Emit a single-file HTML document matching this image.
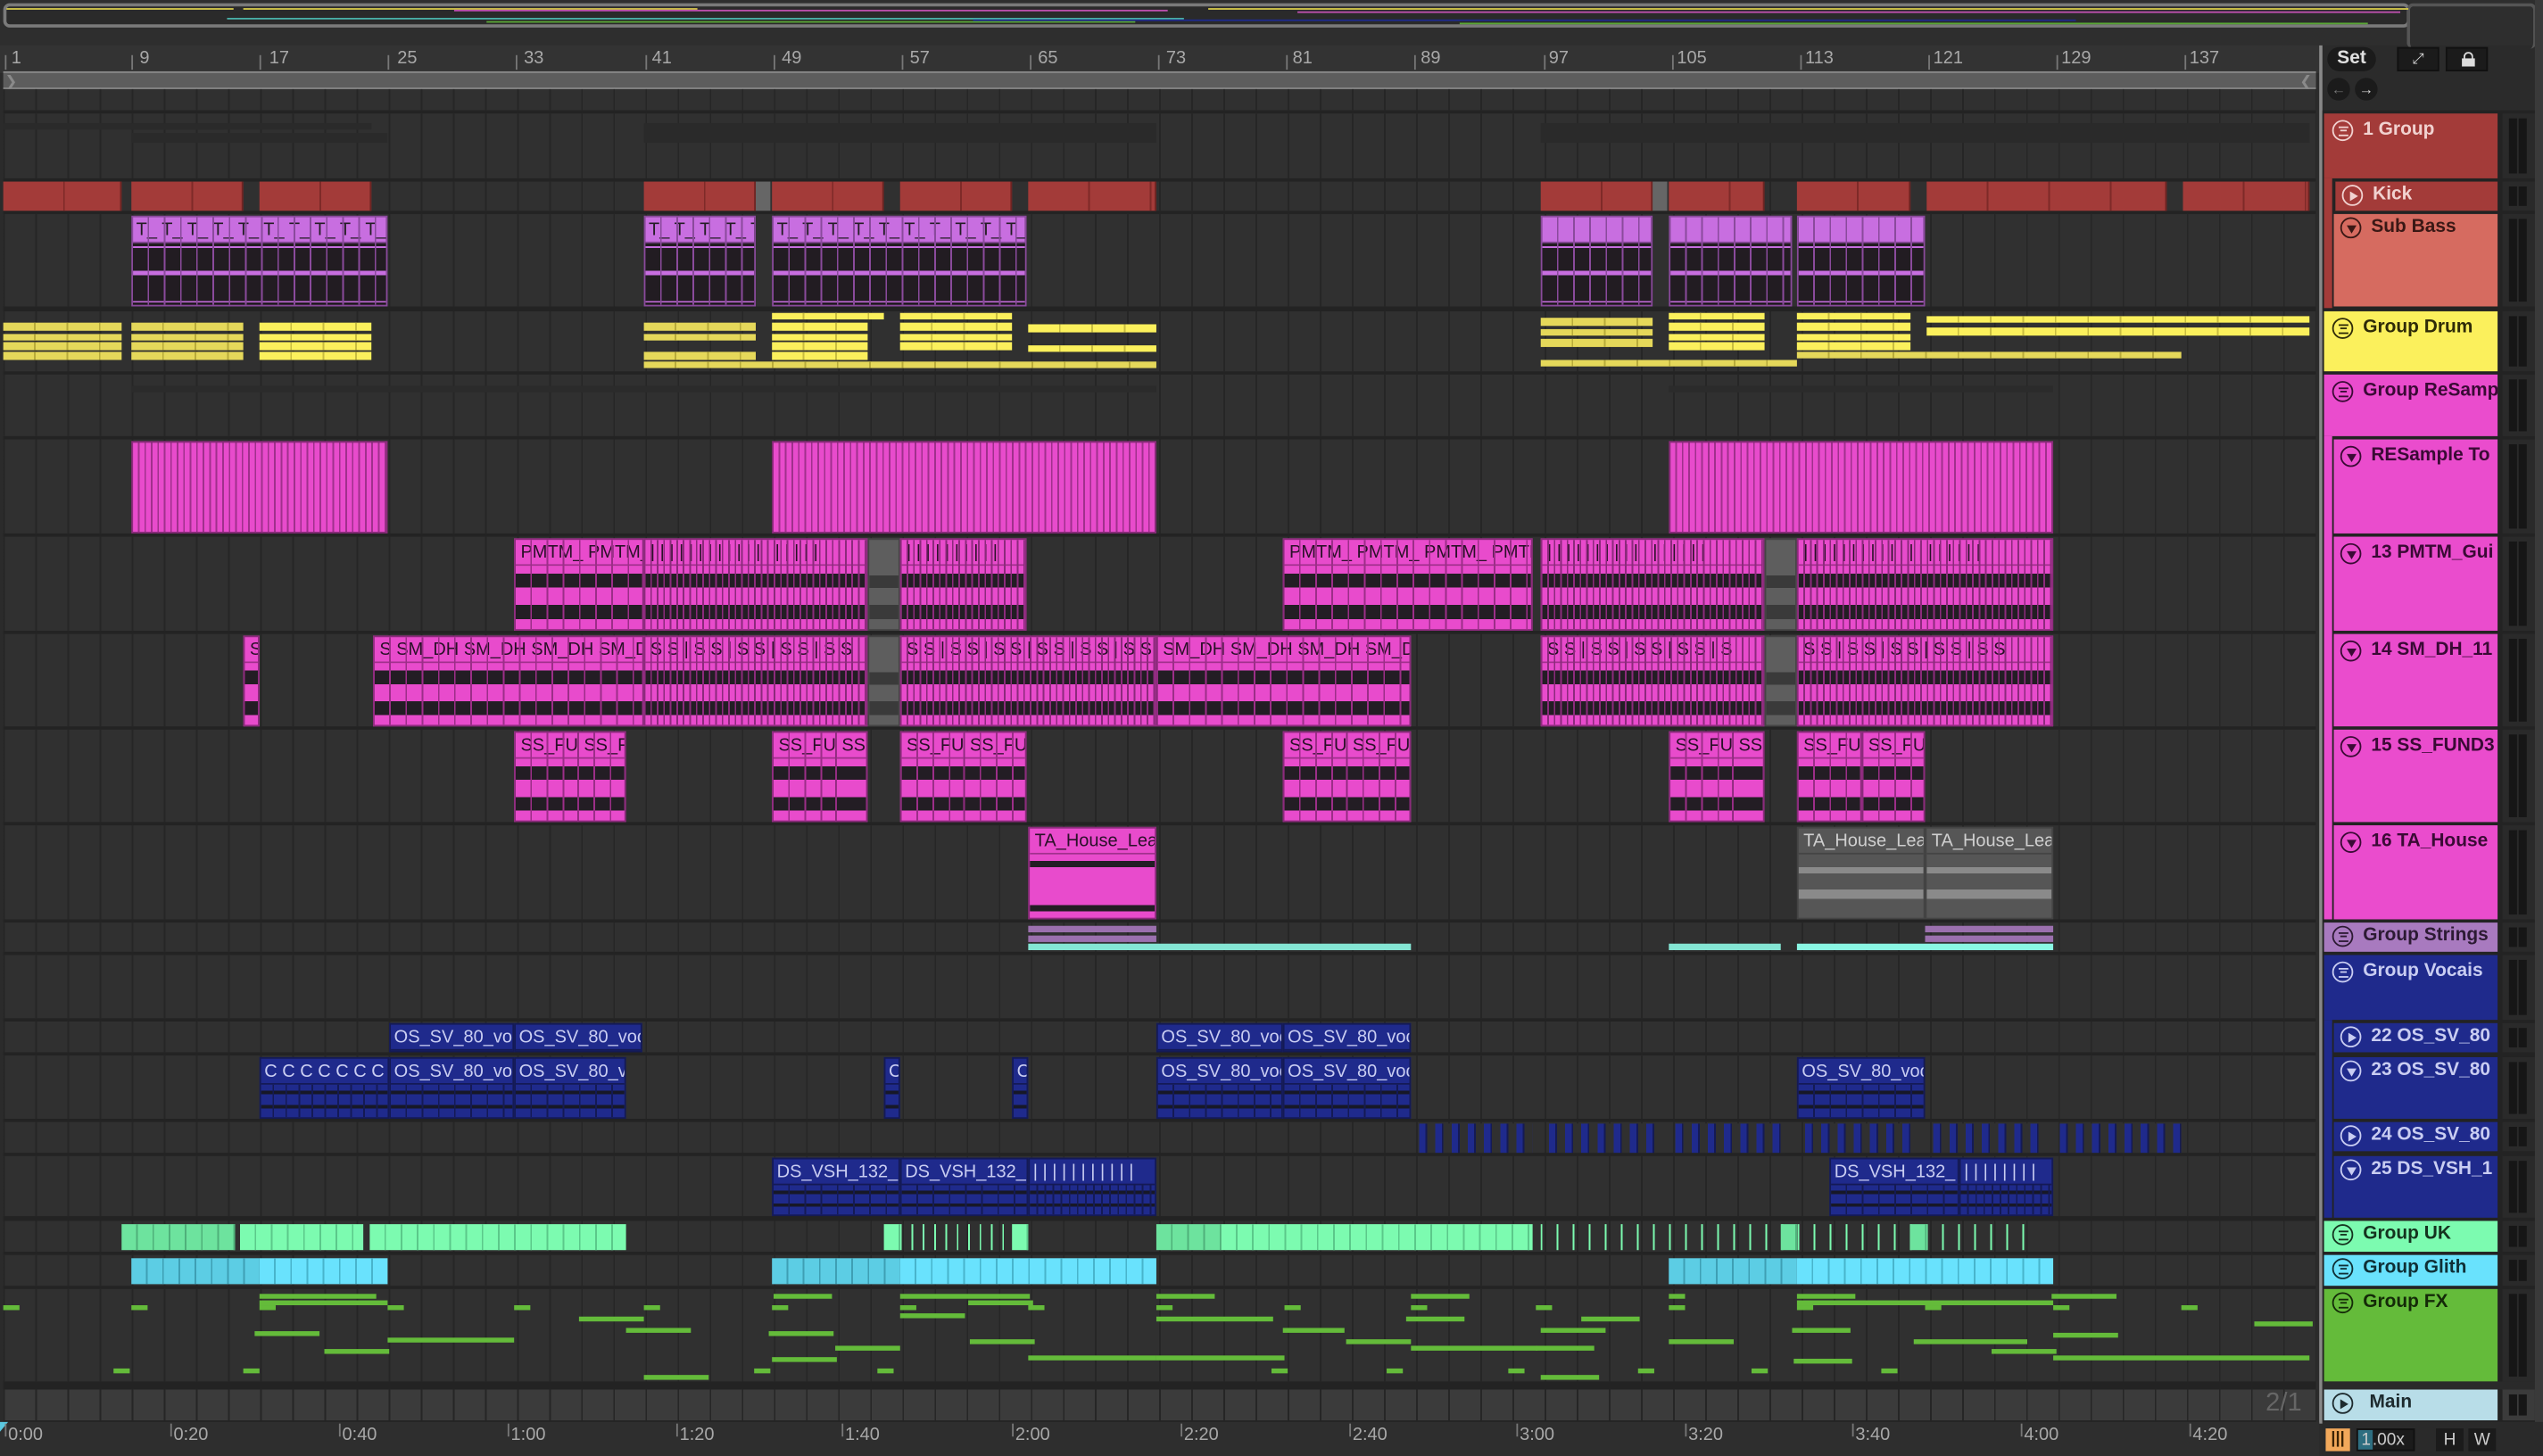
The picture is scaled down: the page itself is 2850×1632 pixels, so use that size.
<!DOCTYPE html>
<html><head><meta charset="utf-8"><style>
*{margin:0;padding:0;box-sizing:border-box}
html,body{width:2850px;height:1632px;overflow:hidden;background:#2b2b2b}
#s{position:absolute;left:0;top:0;width:1568px;height:898px;transform:scale(1.8176,1.8174);transform-origin:0 0;background:#2b2b2b;font-family:"Liberation Sans",sans-serif;overflow:hidden}
.a{position:absolute}
#arr{position:absolute;left:2px;top:55px;width:1426px;height:822px;background:#232323}
.row{position:absolute;left:0;width:1426px;background-color:#303030;background-image:repeating-linear-gradient(90deg,#262626 0 1px,transparent 1px 19.8px)}
.c{position:absolute;overflow:hidden;white-space:nowrap}
.k{background:#a33b39;border-right:1px solid #6e2422;background-image:repeating-linear-gradient(90deg,transparent 0 37px,#7e2a28 37px 38px)}
.sb{background:#221c22;border:1px solid #8a4a9c}
.sb .h{height:16px;background:#c86ee0;color:#231d24;font-size:11px;line-height:17px;padding-left:2px;border-bottom:1px solid #8a4a9c;background-image:repeating-linear-gradient(90deg,transparent 0 9px,#8a4a9c 9px 10px)}
.sb .w{position:absolute;left:0;right:0;top:16px;bottom:0;background:linear-gradient(#221c22 0 2px,#c86ee0 2px 3px,#221c22 3px 45%,#c86ee0 45% 52%,#221c22 52% 94%,#c86ee0 94% 96%,#221c22 96%);}
.sb .v{position:absolute;left:0;right:0;top:0;bottom:0;background:repeating-linear-gradient(90deg,transparent 0 9px,#8a4a9c 9px 10px)}
.y{background:#e5d85a;background-image:repeating-linear-gradient(90deg,transparent 0 19px,#b8ab3a 19px 20px)}
.yy{background:#fbf05c;background-image:repeating-linear-gradient(90deg,transparent 0 19px,#c8bd40 19px 20px)}
.p{background:#e84bcc;border:1px solid #8c2a7c}
.p .h{height:16px;color:#2a1028;font-size:11px;line-height:17px;padding-left:3px;border-bottom:1px solid #a0308c;overflow:hidden}
.p .w{position:absolute;left:0;right:0;top:16px;bottom:0;background:linear-gradient(#e84bcc 0 12%,#231d24 12% 34%,#e84bcc 34% 62%,#231d24 62% 84%,#e84bcc 84%)}
.p .v{position:absolute;left:0;right:0;top:0;bottom:0;background:repeating-linear-gradient(90deg,transparent 0 9px,#9c2e88 9px 10px)}
.dense .v{background:repeating-linear-gradient(90deg,transparent 0 3px,#8c2a7c 3px 4px)}
.g{background:#5e5e5e;border:1px solid #444}
.g .w{position:absolute;left:0;right:0;top:16px;bottom:0;background:linear-gradient(#5e5e5e 0 15%,#3a3a3a 15% 35%,#5e5e5e 35% 62%,#3a3a3a 62% 84%,#5e5e5e 84%)}
.gr{background:#565656;border:1px solid #444}
.gr .h{height:16px;color:#cfcfcf;font-size:11px;line-height:17px;padding-left:3px;border-bottom:1px solid #444}
.gr .w{position:absolute;left:0;right:0;top:16px;bottom:0;background:linear-gradient(#565656 0 20%,#8a8a8a 20% 30%,#565656 30% 55%,#8a8a8a 55% 70%,#565656 70%)}
.b{background:#1f2a8c;border:1px solid #141a55}
.b .h{height:16px;color:#c9cdf2;font-size:11px;line-height:17px;padding-left:2px;border-bottom:1px solid #141a55}
.b .w{position:absolute;left:0;right:0;top:16px;bottom:0;background:linear-gradient(#1f2a8c 0 18%,#171827 18% 30%,#1f2a8c 30% 62%,#171827 62% 74%,#1f2a8c 74%)}
.b .v{position:absolute;left:0;right:0;top:16px;bottom:0;background:repeating-linear-gradient(90deg,transparent 0 9px,#141a55 9px 10px)}
.uk{background:#7cfbb0;background-image:repeating-linear-gradient(90deg,transparent 0 9px,#5bc88a 9px 10px)}
.ukd{background:#6de39e;background-image:repeating-linear-gradient(90deg,transparent 0 9px,#4fb07a 9px 10px)}
.cy{background:#69e2fd;background-image:repeating-linear-gradient(90deg,transparent 0 9px,#48b4cc 9px 10px)}
.cyd{background:#5ccde4;background-image:repeating-linear-gradient(90deg,transparent 0 9px,#3e9fb4 9px 10px)}
.fx{position:absolute;height:3px;background:#64bb3a}
.hd{position:absolute;left:1433px;width:107px;font-weight:bold;font-size:11.5px;overflow:hidden;white-space:nowrap}
.hd span{position:absolute;left:24px;top:4px}
.hd.sub span{left:29px}
.ic{position:absolute;left:5px;top:4px;width:13px;height:13px;border:1.3px solid currentColor;border-radius:50%}
.sub .ic{left:10px}
.ic.l::before{content:"";position:absolute;left:2.5px;top:3px;width:6px;height:4px;border-top:1px solid currentColor;border-bottom:1px solid currentColor}
.ic.l::after{content:"";position:absolute;left:3.5px;top:5px;width:4px;height:1px;background:currentColor}
.ic.pl::before{content:"";position:absolute;left:4px;top:2.5px;border-left:5px solid currentColor;border-top:3.5px solid transparent;border-bottom:3.5px solid transparent}
.ic.dn::before{content:"";position:absolute;left:2.5px;top:4px;border-top:5px solid currentColor;border-left:3.5px solid transparent;border-right:3.5px solid transparent}
.m{position:absolute;left:1543px;width:20px;background:#2a2a2a}
.m::before{content:"";position:absolute;left:4px;top:3px;bottom:3px;width:5px;background:#161616}
.m::after{content:"";position:absolute;left:10px;top:3px;bottom:3px;width:5px;background:#161616}
.rl{position:absolute;top:30px;font-size:11px;color:#a8a8a8}
.tk{position:absolute;top:34px;width:1px;height:9px;background:#777}
.tl{position:absolute;top:879px;font-size:11px;color:#a8a8a8}
.tt{position:absolute;top:878px;width:1px;height:8px;background:#777}
</style></head><body><div id="s">

<!-- overview -->
<div class="a" style="left:0;top:0;width:1568px;height:28px;background:#2e2e2e"></div>
<div class="a" style="left:2px;top:2px;width:1484px;height:15px;border:2px solid #7a7a7a;border-radius:4px;background:#2a2a2a"></div>
<div class="a" style="left:1484px;top:2px;width:80px;height:28px;border:2px solid #555;border-radius:4px;border-bottom:none"></div>
<div class="a" style="left:4px;top:5px;width:140px;height:1px;background:#d4c84a"></div>
<div class="a" style="left:150px;top:5px;width:280px;height:1px;background:#d4c84a"></div>
<div class="a" style="left:280px;top:6px;width:440px;height:1px;background:#c050b0"></div>
<div class="a" style="left:140px;top:11px;width:590px;height:1px;background:#49b0a8"></div>
<div class="a" style="left:300px;top:13px;width:400px;height:1px;background:#5aa836"></div>
<div class="a" style="left:600px;top:12px;width:680px;height:1px;background:#1f2a8c"></div>
<div class="a" style="left:745px;top:5px;width:740px;height:1px;background:#d4c84a"></div>
<div class="a" style="left:800px;top:7px;width:680px;height:1px;background:#c050b0"></div>
<div class="a" style="left:900px;top:14px;width:560px;height:1px;background:#5aa836"></div>

<!-- ruler -->
<div class="a" style="left:0;top:28px;width:1430px;height:17px;background:#333"></div>
<div class="a" style="left:2px;top:44px;width:1426px;height:11px;background:#5d5d5d;border-top:1px solid #8a8a8a;border-bottom:1px solid #888"></div>
<div class="a" style="left:3px;top:45px;color:#8a8a8a;font-size:9px">&#x276F;</div>
<div class="a" style="left:1418px;top:45px;color:#8a8a8a;font-size:9px">&#x276E;</div>
<div class="tk" style="left:3px"></div><div class="rl" style="left:7px">1</div>
<div class="tk" style="left:81px"></div><div class="rl" style="left:86px">9</div>
<div class="tk" style="left:160px"></div><div class="rl" style="left:166px">17</div>
<div class="tk" style="left:239px"></div><div class="rl" style="left:245px">25</div>
<div class="tk" style="left:318px"></div><div class="rl" style="left:323px">33</div>
<div class="tk" style="left:398px"></div><div class="rl" style="left:402px">41</div>
<div class="tk" style="left:477px"></div><div class="rl" style="left:482px">49</div>
<div class="tk" style="left:556px"></div><div class="rl" style="left:561px">57</div>
<div class="tk" style="left:635px"></div><div class="rl" style="left:640px">65</div>
<div class="tk" style="left:714px"></div><div class="rl" style="left:719px">73</div>
<div class="tk" style="left:793px"></div><div class="rl" style="left:797px">81</div>
<div class="tk" style="left:872px"></div><div class="rl" style="left:876px">89</div>
<div class="tk" style="left:952px"></div><div class="rl" style="left:955px">97</div>
<div class="tk" style="left:1031px"></div><div class="rl" style="left:1034px">105</div>
<div class="tk" style="left:1110px"></div><div class="rl" style="left:1113px">113</div>
<div class="tk" style="left:1189px"></div><div class="rl" style="left:1192px">121</div>
<div class="tk" style="left:1268px"></div><div class="rl" style="left:1271px">129</div>
<div class="tk" style="left:1347px"></div><div class="rl" style="left:1350px">137</div>

<!-- Set / buttons -->
<div class="a" style="left:1435px;top:29px;width:30px;height:15px;border-radius:8px;background:#1b1b1b;color:#e0e0e0;font-size:11.5px;font-weight:bold;text-align:center;line-height:15px">Set</div>
<div class="a" style="left:1478px;top:29px;width:26px;height:15px;background:#1b1b1b;border:1px solid #111;color:#ddd;font-size:9px;text-align:center;line-height:13px">&#x2922;</div>
<div class="a" style="left:1508px;top:29px;width:26px;height:15px;background:#1b1b1b;border:1px solid #111;"><div class="a" style="left:9px;top:6px;width:8px;height:5px;background:#ddd"></div><div class="a" style="left:10px;top:2px;width:6px;height:6px;border:1.5px solid #ddd;border-radius:3px 3px 0 0;border-bottom:none"></div></div>
<div class="a" style="left:1435px;top:48px;width:14px;height:14px;border-radius:50%;background:#1b1b1b;color:#777;font-size:9px;text-align:center;line-height:14px">&#x2190;</div>
<div class="a" style="left:1452px;top:48px;width:14px;height:14px;border-radius:50%;background:#1b1b1b;color:#ddd;font-size:9px;text-align:center;line-height:14px">&#x2192;</div>

<div class="a" style="left:1430px;top:28px;width:2px;height:850px;background:#888"></div>

<div id="arr">
<!-- rows: top relative to 55 -->
<div class="row" style="top:0;height:13px"></div>
<div class="row" style="top:15px;height:40px"></div>
<div class="row" style="top:57px;height:18px"></div>
<div class="row" style="top:77px;height:57px"></div>
<div class="row" style="top:137px;height:37px"></div>
<div class="row" style="top:176px;height:38px"></div>
<div class="row" style="top:216px;height:58px"></div>
<div class="row" style="top:276px;height:58px"></div>
<div class="row" style="top:336px;height:57px"></div>
<div class="row" style="top:395px;height:57px"></div>
<div class="row" style="top:454px;height:58px"></div>
<div class="row" style="top:514px;height:18px"></div>
<div class="row" style="top:534px;height:39px"></div>
<div class="row" style="top:575px;height:19px"></div>
<div class="row" style="top:596px;height:39px"></div>
<div class="row" style="top:637px;height:19px"></div>
<div class="row" style="top:658px;height:37px"></div>
<div class="row" style="top:698px;height:19px"></div>
<div class="row" style="top:719px;height:19px"></div>
<div class="row" style="top:740px;height:57px"></div>
<div class="row" style="top:802px;height:19px;background-color:#3b3b3b"></div>
</div>

<!-- group overview faint -->
<div class="a" style="left:2px;top:76px;width:136px;height:4px;background:#2a2a2a"></div>
<div class="a" style="left:81px;top:76px;width:148px;height:4px;background:#2a2a2a"></div>
<div class="a" style="left:81px;top:82px;width:158px;height:6px;background:#2a2a2a"></div>
<div class="a" style="left:397px;top:76px;width:316px;height:12px;background:#2a2a2a"></div>
<div class="a" style="left:950px;top:76px;width:474px;height:12px;background:#2a2a2a"></div>
<div class="a" style="left:81px;top:238px;width:632px;height:4px;background:#2b2b2b"></div>
<div class="a" style="left:1029px;top:238px;width:237px;height:4px;background:#2b2b2b"></div>

<!-- Kick -->
<div class="c k" style="left:2px;top:112px;width:73px;height:18px"></div>
<div class="c k" style="left:81px;top:112px;width:69px;height:18px"></div>
<div class="c k" style="left:160px;top:112px;width:69px;height:18px"></div>
<div class="c k" style="left:397px;top:112px;width:69px;height:18px"></div>
<div class="c" style="left:466px;top:112px;width:9px;height:18px;background:#666"></div>
<div class="c k" style="left:476px;top:112px;width:69px;height:18px"></div>
<div class="c k" style="left:555px;top:112px;width:69px;height:18px"></div>
<div class="c k" style="left:634px;top:112px;width:79px;height:18px"></div>
<div class="c k" style="left:950px;top:112px;width:69px;height:18px"></div>
<div class="c" style="left:1019px;top:112px;width:9px;height:18px;background:#666"></div>
<div class="c k" style="left:1029px;top:112px;width:59px;height:18px"></div>
<div class="c k" style="left:1108px;top:112px;width:70px;height:18px"></div>
<div class="c k" style="left:1188px;top:112px;width:148px;height:18px"></div>
<div class="c k" style="left:1346px;top:112px;width:78px;height:18px"></div>

<!-- Sub bass -->
<div class="c sb" style="left:81px;top:133px;width:158px;height:56px"><div class="h">T_ T_ T_ T_ T_ T_ T_ T_ T_ T_ T_ T_ T_ T_ T_ T_</div><div class="w"></div><div class="v"></div></div>
<div class="c sb" style="left:397px;top:133px;width:69px;height:56px"><div class="h">T_ T_ T_ T_ T_ T_ T_</div><div class="w"></div><div class="v"></div></div>
<div class="c sb" style="left:476px;top:133px;width:157px;height:56px"><div class="h">T_ T_ T_ T_ T_ T_ T_ T_ T_ T_ T_ T_ T_ T_ T_ T_</div><div class="w"></div><div class="v"></div></div>
<div class="c sb" style="left:950px;top:133px;width:69px;height:56px"><div class="h" style="color:transparent">.</div><div class="w"></div><div class="v"></div></div>
<div class="c sb" style="left:1029px;top:133px;width:76px;height:56px"><div class="h" style="color:transparent">.</div><div class="w"></div><div class="v"></div></div>
<div class="c sb" style="left:1108px;top:133px;width:79px;height:56px"><div class="h" style="color:transparent">.</div><div class="w"></div><div class="v"></div></div>

<!-- Yellow drums -->
<div class="c y" style="left:2px;top:199px;width:73px;height:5px"></div><div class="c y" style="left:2px;top:206px;width:73px;height:4px"></div><div class="c y" style="left:2px;top:211px;width:73px;height:5px"></div><div class="c y" style="left:2px;top:217px;width:73px;height:5px"></div>
<div class="c y" style="left:81px;top:199px;width:69px;height:5px"></div><div class="c y" style="left:81px;top:206px;width:69px;height:4px"></div><div class="c y" style="left:81px;top:211px;width:69px;height:5px"></div><div class="c y" style="left:81px;top:217px;width:69px;height:5px"></div>
<div class="c yy" style="left:160px;top:199px;width:69px;height:5px"></div><div class="c yy" style="left:160px;top:206px;width:69px;height:4px"></div><div class="c yy" style="left:160px;top:211px;width:69px;height:5px"></div><div class="c yy" style="left:160px;top:217px;width:69px;height:5px"></div>
<div class="c y" style="left:397px;top:199px;width:69px;height:5px"></div><div class="c y" style="left:397px;top:206px;width:69px;height:4px"></div><div class="c y" style="left:397px;top:217px;width:69px;height:5px"></div>
<div class="c yy" style="left:476px;top:193px;width:69px;height:4px"></div><div class="c yy" style="left:476px;top:199px;width:59px;height:5px"></div><div class="c yy" style="left:476px;top:206px;width:59px;height:4px"></div><div class="c yy" style="left:476px;top:211px;width:59px;height:5px"></div><div class="c yy" style="left:476px;top:217px;width:59px;height:5px"></div>
<div class="c yy" style="left:555px;top:193px;width:69px;height:4px"></div><div class="c yy" style="left:555px;top:199px;width:69px;height:5px"></div><div class="c yy" style="left:555px;top:206px;width:69px;height:4px"></div><div class="c yy" style="left:555px;top:211px;width:69px;height:5px"></div>
<div class="c yy" style="left:634px;top:200px;width:79px;height:5px"></div><div class="c yy" style="left:634px;top:213px;width:79px;height:4px"></div>
<div class="c y" style="left:397px;top:223px;width:316px;height:4px"></div>
<div class="c y" style="left:950px;top:196px;width:69px;height:5px"></div><div class="c y" style="left:950px;top:203px;width:69px;height:4px"></div><div class="c y" style="left:950px;top:209px;width:69px;height:5px"></div>
<div class="c yy" style="left:1029px;top:193px;width:59px;height:4px"></div><div class="c yy" style="left:1029px;top:199px;width:59px;height:5px"></div><div class="c yy" style="left:1029px;top:206px;width:59px;height:4px"></div><div class="c yy" style="left:1029px;top:211px;width:59px;height:5px"></div>
<div class="c yy" style="left:1108px;top:193px;width:70px;height:4px"></div><div class="c yy" style="left:1108px;top:199px;width:70px;height:5px"></div><div class="c yy" style="left:1108px;top:206px;width:70px;height:4px"></div><div class="c yy" style="left:1108px;top:211px;width:70px;height:5px"></div>
<div class="c yy" style="left:1188px;top:195px;width:236px;height:4px"></div><div class="c yy" style="left:1188px;top:202px;width:236px;height:5px"></div>
<div class="c y" style="left:950px;top:222px;width:158px;height:4px"></div><div class="c y" style="left:1108px;top:217px;width:237px;height:4px"></div>

<!-- RESample -->
<div class="c p dense" style="left:81px;top:272px;width:158px;height:57px;background:repeating-linear-gradient(90deg,#e84bcc 0 3px,#a0308c 3px 4px)"></div>
<div class="c p dense" style="left:476px;top:272px;width:237px;height:57px;background:repeating-linear-gradient(90deg,#e84bcc 0 3px,#a0308c 3px 4px)"></div>
<div class="c p dense" style="left:1029px;top:272px;width:237px;height:57px;background:repeating-linear-gradient(90deg,#e84bcc 0 3px,#a0308c 3px 4px)"></div>

<!-- PMTM -->
<div class="c p" style="left:317px;top:332px;width:80px;height:57px"><div class="h">PMTM_ PMTM_</div><div class="w"></div><div class="v"></div></div>
<div class="c p dense" style="left:397px;top:332px;width:138px;height:57px"><div class="h">| | | | | | | | | | | | | | | | | |</div><div class="w"></div><div class="v"></div></div>
<div class="c g" style="left:535px;top:332px;width:20px;height:57px"><div class="w"></div></div>
<div class="c p dense" style="left:555px;top:332px;width:78px;height:57px"><div class="h">| | | | | | | | | |</div><div class="w"></div><div class="v"></div></div>
<div class="c p" style="left:791px;top:332px;width:154px;height:57px"><div class="h">PMTM_ PMTM_ PMTM_ PMTM_</div><div class="w"></div><div class="v"></div></div>
<div class="c p dense" style="left:950px;top:332px;width:138px;height:57px"><div class="h">| | | | | | | | | | | | | | | | |</div><div class="w"></div><div class="v"></div></div>
<div class="c g" style="left:1088px;top:332px;width:20px;height:57px"><div class="w"></div></div>
<div class="c p dense" style="left:1108px;top:332px;width:158px;height:57px"><div class="h">| | | | | | | | | | | | | | | | | | |</div><div class="w"></div><div class="v"></div></div>

<!-- SM_DH -->
<div class="c p" style="left:150px;top:392px;width:10px;height:56px"><div class="h">S</div><div class="w"></div></div>
<div class="c p" style="left:230px;top:392px;width:167px;height:56px"><div class="h">S SM_DH SM_DH SM_DH SM_DH</div><div class="w"></div><div class="v"></div></div>
<div class="c p dense" style="left:397px;top:392px;width:138px;height:56px"><div class="h">S S | S S | S S | S S | S S</div><div class="w"></div><div class="v"></div></div>
<div class="c g" style="left:535px;top:392px;width:20px;height:56px"><div class="w"></div></div>
<div class="c p dense" style="left:555px;top:392px;width:158px;height:56px"><div class="h">S S | S S | S S | S S | S S | S S</div><div class="w"></div><div class="v"></div></div>
<div class="c p" style="left:713px;top:392px;width:157px;height:56px"><div class="h">SM_DH SM_DH SM_DH SM_DH</div><div class="w"></div><div class="v"></div></div>
<div class="c p dense" style="left:950px;top:392px;width:138px;height:56px"><div class="h">S S | S S | S S | S S | S</div><div class="w"></div><div class="v"></div></div>
<div class="c g" style="left:1088px;top:392px;width:20px;height:56px"><div class="w"></div></div>
<div class="c p dense" style="left:1108px;top:392px;width:158px;height:56px"><div class="h">S S | S S | S S | S S | S S</div><div class="w"></div><div class="v"></div></div>

<!-- SS_FUND -->
<div class="c p" style="left:317px;top:451px;width:40px;height:56px"><div class="h">SS_FU</div><div class="w"></div><div class="v"></div></div>
<div class="c p" style="left:356px;top:451px;width:30px;height:56px"><div class="h">SS_F</div><div class="w"></div><div class="v"></div></div>
<div class="c p" style="left:476px;top:451px;width:40px;height:56px"><div class="h">SS_FU</div><div class="w"></div><div class="v"></div></div>
<div class="c p" style="left:515px;top:451px;width:20px;height:56px"><div class="h">SS</div><div class="w"></div></div>
<div class="c p" style="left:555px;top:451px;width:40px;height:56px"><div class="h">SS_FU</div><div class="w"></div><div class="v"></div></div>
<div class="c p" style="left:594px;top:451px;width:39px;height:56px"><div class="h">SS_FU</div><div class="w"></div><div class="v"></div></div>
<div class="c p" style="left:791px;top:451px;width:40px;height:56px"><div class="h">SS_FU</div><div class="w"></div><div class="v"></div></div>
<div class="c p" style="left:830px;top:451px;width:40px;height:56px"><div class="h">SS_FU</div><div class="w"></div><div class="v"></div></div>
<div class="c p" style="left:1029px;top:451px;width:40px;height:56px"><div class="h">SS_FU</div><div class="w"></div><div class="v"></div></div>
<div class="c p" style="left:1068px;top:451px;width:20px;height:56px"><div class="h">SS</div><div class="w"></div></div>
<div class="c p" style="left:1108px;top:451px;width:40px;height:56px"><div class="h">SS_FU</div><div class="w"></div><div class="v"></div></div>
<div class="c p" style="left:1148px;top:451px;width:39px;height:56px"><div class="h">SS_FU</div><div class="w"></div><div class="v"></div></div>

<!-- TA_House -->
<div class="c p" style="left:634px;top:510px;width:79px;height:57px"><div class="h">TA_House_Lea</div><div class="w" style="background:linear-gradient(#e84bcc 0 10%,#231d24 10% 20%,#e84bcc 20% 80%,#231d24 80% 90%,#e84bcc 90%)"></div></div>
<div class="c gr" style="left:1108px;top:510px;width:79px;height:57px"><div class="h">TA_House_Lea</div><div class="w"></div></div>
<div class="c gr" style="left:1187px;top:510px;width:79px;height:57px"><div class="h">TA_House_Lea</div><div class="w"></div></div>

<!-- Strings -->
<div class="c" style="left:634px;top:571px;width:79px;height:4px;background:#9b70ae"></div>
<div class="c" style="left:634px;top:577px;width:79px;height:4px;background:#9b70ae"></div>
<div class="c" style="left:634px;top:582px;width:236px;height:4px;background:#84e6d4"></div>
<div class="c" style="left:1029px;top:582px;width:69px;height:4px;background:#84e6d4"></div>
<div class="c" style="left:1108px;top:582px;width:158px;height:4px;background:#8af8e4"></div>
<div class="c" style="left:1187px;top:571px;width:79px;height:4px;background:#9b70ae"></div>
<div class="c" style="left:1187px;top:577px;width:79px;height:4px;background:#9b70ae"></div>

<!-- 22 OS -->
<div class="c b" style="left:240px;top:631px;width:77px;height:18px"><div class="h">OS_SV_80_voc</div></div>
<div class="c b" style="left:317px;top:631px;width:79px;height:18px"><div class="h">OS_SV_80_voc</div></div>
<div class="c b" style="left:713px;top:631px;width:78px;height:18px"><div class="h">OS_SV_80_voc</div></div>
<div class="c b" style="left:791px;top:631px;width:79px;height:18px"><div class="h">OS_SV_80_voc</div></div>

<!-- 23 OS -->
<div class="c b" style="left:160px;top:652px;width:80px;height:38px"><div class="h">C C C C C C C C C</div><div class="w"></div><div class="v" style="background:repeating-linear-gradient(90deg,transparent 0 7px,#141a55 7px 8px)"></div></div>
<div class="c b" style="left:240px;top:652px;width:77px;height:38px"><div class="h">OS_SV_80_voc</div><div class="w"></div><div class="v"></div></div>
<div class="c b" style="left:317px;top:652px;width:69px;height:38px"><div class="h">OS_SV_80_v</div><div class="w"></div><div class="v"></div></div>
<div class="c b" style="left:545px;top:652px;width:10px;height:38px"><div class="h">C</div><div class="w"></div></div>
<div class="c b" style="left:624px;top:652px;width:10px;height:38px"><div class="h">C</div><div class="w"></div></div>
<div class="c b" style="left:713px;top:652px;width:78px;height:38px"><div class="h">OS_SV_80_voc</div><div class="w"></div><div class="v"></div></div>
<div class="c b" style="left:791px;top:652px;width:79px;height:38px"><div class="h">OS_SV_80_voc</div><div class="w"></div><div class="v"></div></div>
<div class="c b" style="left:1108px;top:652px;width:79px;height:38px"><div class="h">OS_SV_80_voc</div><div class="w"></div><div class="v"></div></div>

<!-- 24 OS small -->
<div class="c" style="left:875px;top:693px;width:70px;height:18px;background:repeating-linear-gradient(90deg,#1f2a8c 0 4px,#141a55 4px 5px,#303030 5px 10px)"></div>
<div class="c" style="left:955px;top:693px;width:66px;height:18px;background:repeating-linear-gradient(90deg,#1f2a8c 0 4px,#141a55 4px 5px,#303030 5px 10px)"></div>
<div class="c" style="left:1033px;top:693px;width:68px;height:18px;background:repeating-linear-gradient(90deg,#1f2a8c 0 4px,#141a55 4px 5px,#303030 5px 10px)"></div>
<div class="c" style="left:1113px;top:693px;width:68px;height:18px;background:repeating-linear-gradient(90deg,#1f2a8c 0 4px,#141a55 4px 5px,#303030 5px 10px)"></div>
<div class="c" style="left:1192px;top:693px;width:68px;height:18px;background:repeating-linear-gradient(90deg,#1f2a8c 0 4px,#141a55 4px 5px,#303030 5px 10px)"></div>
<div class="c" style="left:1270px;top:693px;width:75px;height:18px;background:repeating-linear-gradient(90deg,#1f2a8c 0 4px,#141a55 4px 5px,#303030 5px 10px)"></div>

<!-- 25 DS -->
<div class="c b" style="left:476px;top:714px;width:79px;height:36px"><div class="h">DS_VSH_132_</div><div class="w"></div><div class="v"></div></div>
<div class="c b" style="left:555px;top:714px;width:79px;height:36px"><div class="h">DS_VSH_132_</div><div class="w"></div><div class="v"></div></div>
<div class="c b" style="left:634px;top:714px;width:79px;height:36px"><div class="h">| | | | | | | | | | |</div><div class="w"></div><div class="v" style="background:repeating-linear-gradient(90deg,transparent 0 4px,#141a55 4px 5px)"></div></div>
<div class="c b" style="left:1128px;top:714px;width:80px;height:36px"><div class="h">DS_VSH_132_</div><div class="w"></div><div class="v"></div></div>
<div class="c b" style="left:1208px;top:714px;width:58px;height:36px"><div class="h">| | | | | | | |</div><div class="w"></div><div class="v" style="background:repeating-linear-gradient(90deg,transparent 0 4px,#141a55 4px 5px)"></div></div>

<!-- UK -->
<div class="c ukd" style="left:75px;top:755px;width:70px;height:16px"></div>
<div class="c uk" style="left:148px;top:755px;width:76px;height:16px"></div>
<div class="c uk" style="left:228px;top:755px;width:158px;height:16px"></div>
<div class="c uk" style="left:545px;top:755px;width:10px;height:16px"></div>
<div class="c" style="left:555px;top:755px;width:69px;height:16px;background:repeating-linear-gradient(90deg,#7cfbb0 0 1px,transparent 1px 7px)"></div>
<div class="c uk" style="left:624px;top:755px;width:10px;height:16px"></div>
<div class="c ukd" style="left:713px;top:755px;width:40px;height:16px"></div>
<div class="c uk" style="left:753px;top:755px;width:192px;height:16px"></div>
<div class="c" style="left:950px;top:755px;width:300px;height:16px;background:repeating-linear-gradient(90deg,#7cfbb0 0 1px,transparent 1px 9.9px)"></div>
<div class="c ukd" style="left:1098px;top:755px;width:10px;height:16px"></div>
<div class="c ukd" style="left:1178px;top:755px;width:10px;height:16px"></div>

<!-- Glith -->
<div class="c cyd" style="left:81px;top:776px;width:79px;height:16px"></div>
<div class="c cy" style="left:160px;top:776px;width:79px;height:16px"></div>
<div class="c cyd" style="left:476px;top:776px;width:79px;height:16px"></div>
<div class="c cy" style="left:555px;top:776px;width:158px;height:16px"></div>
<div class="c cyd" style="left:1029px;top:776px;width:79px;height:16px"></div>
<div class="c cy" style="left:1108px;top:776px;width:158px;height:16px"></div>

<!-- FX -->
<div class="fx" style="left:2px;top:805px;width:10px"></div>
<div class="fx" style="left:81px;top:805px;width:10px"></div>
<div class="fx" style="left:160px;top:805px;width:10px"></div>
<div class="fx" style="left:160px;top:798px;width:72px"></div>
<div class="fx" style="left:160px;top:802px;width:79px"></div>
<div class="fx" style="left:157px;top:821px;width:40px"></div>
<div class="fx" style="left:200px;top:832px;width:40px"></div>
<div class="fx" style="left:239px;top:805px;width:10px"></div>
<div class="fx" style="left:239px;top:825px;width:78px"></div>
<div class="fx" style="left:70px;top:844px;width:10px"></div>
<div class="fx" style="left:150px;top:844px;width:10px"></div>
<div class="fx" style="left:317px;top:805px;width:10px"></div>
<div class="fx" style="left:357px;top:812px;width:40px"></div>
<div class="fx" style="left:386px;top:819px;width:40px"></div>
<div class="fx" style="left:397px;top:805px;width:10px"></div>
<div class="fx" style="left:397px;top:848px;width:40px"></div>
<div class="fx" style="left:465px;top:844px;width:10px"></div>
<div class="fx" style="left:476px;top:805px;width:10px"></div>
<div class="fx" style="left:474px;top:821px;width:40px"></div>
<div class="fx" style="left:476px;top:837px;width:40px"></div>
<div class="fx" style="left:477px;top:798px;width:36px"></div>
<div class="fx" style="left:515px;top:830px;width:40px"></div>
<div class="fx" style="left:541px;top:844px;width:10px"></div>
<div class="fx" style="left:555px;top:805px;width:10px"></div>
<div class="fx" style="left:555px;top:798px;width:80px"></div>
<div class="fx" style="left:555px;top:810px;width:40px"></div>
<div class="fx" style="left:597px;top:802px;width:40px"></div>
<div class="fx" style="left:598px;top:826px;width:40px"></div>
<div class="fx" style="left:634px;top:805px;width:10px"></div>
<div class="fx" style="left:634px;top:836px;width:79px"></div>
<div class="fx" style="left:713px;top:798px;width:36px"></div>
<div class="fx" style="left:713px;top:805px;width:10px"></div>
<div class="fx" style="left:713px;top:812px;width:72px"></div>
<div class="fx" style="left:713px;top:836px;width:79px"></div>
<div class="fx" style="left:784px;top:844px;width:10px"></div>
<div class="fx" style="left:792px;top:805px;width:10px"></div>
<div class="fx" style="left:791px;top:819px;width:38px"></div>
<div class="fx" style="left:830px;top:826px;width:40px"></div>
<div class="fx" style="left:870px;top:798px;width:36px"></div>
<div class="fx" style="left:870px;top:805px;width:10px"></div>
<div class="fx" style="left:867px;top:812px;width:36px"></div>
<div class="fx" style="left:870px;top:830px;width:78px"></div>
<div class="fx" style="left:855px;top:844px;width:10px"></div>
<div class="fx" style="left:930px;top:844px;width:10px"></div>
<div class="fx" style="left:947px;top:805px;width:10px"></div>
<div class="fx" style="left:950px;top:819px;width:40px"></div>
<div class="fx" style="left:975px;top:812px;width:36px"></div>
<div class="fx" style="left:947px;top:830px;width:36px"></div>
<div class="fx" style="left:950px;top:848px;width:36px"></div>
<div class="fx" style="left:1010px;top:844px;width:10px"></div>
<div class="fx" style="left:1029px;top:798px;width:10px"></div>
<div class="fx" style="left:1029px;top:805px;width:10px"></div>
<div class="fx" style="left:1029px;top:826px;width:40px"></div>
<div class="fx" style="left:1080px;top:844px;width:10px"></div>
<div class="fx" style="left:1108px;top:798px;width:36px"></div>
<div class="fx" style="left:1108px;top:802px;width:158px"></div>
<div class="fx" style="left:1108px;top:805px;width:10px"></div>
<div class="fx" style="left:1105px;top:819px;width:36px"></div>
<div class="fx" style="left:1106px;top:838px;width:36px"></div>
<div class="fx" style="left:1187px;top:805px;width:10px"></div>
<div class="fx" style="left:1160px;top:844px;width:10px"></div>
<div class="fx" style="left:1180px;top:826px;width:70px"></div>
<div class="fx" style="left:1228px;top:832px;width:40px"></div>
<div class="fx" style="left:1265px;top:798px;width:40px"></div>
<div class="fx" style="left:1266px;top:805px;width:10px"></div>
<div class="fx" style="left:1266px;top:822px;width:40px"></div>
<div class="fx" style="left:1266px;top:836px;width:158px"></div>
<div class="fx" style="left:1345px;top:805px;width:10px"></div>
<div class="fx" style="left:1390px;top:815px;width:36px"></div>

<!-- 2/1 -->
<div class="a" style="left:1397px;top:857px;font-size:16px;color:#666">2/1</div>

<!-- time ruler -->
<div class="a" style="left:0;top:877px;width:1430px;height:21px;background:#2e2e2e"></div>
<div class="a" style="left:0;top:877px;border-top:6px solid #5ac8e0;border-right:5px solid transparent"></div>
<div class="tt" style="left:3px"></div><div class="tl" style="left:5px">0:00</div>
<div class="tt" style="left:105px"></div><div class="tl" style="left:107px">0:20</div>
<div class="tt" style="left:209px"></div><div class="tl" style="left:211px">0:40</div>
<div class="tt" style="left:313px"></div><div class="tl" style="left:315px">1:00</div>
<div class="tt" style="left:417px"></div><div class="tl" style="left:419px">1:20</div>
<div class="tt" style="left:519px"></div><div class="tl" style="left:521px">1:40</div>
<div class="tt" style="left:624px"></div><div class="tl" style="left:626px">2:00</div>
<div class="tt" style="left:728px"></div><div class="tl" style="left:730px">2:20</div>
<div class="tt" style="left:832px"></div><div class="tl" style="left:834px">2:40</div>
<div class="tt" style="left:935px"></div><div class="tl" style="left:937px">3:00</div>
<div class="tt" style="left:1039px"></div><div class="tl" style="left:1041px">3:20</div>
<div class="tt" style="left:1142px"></div><div class="tl" style="left:1144px">3:40</div>
<div class="tt" style="left:1246px"></div><div class="tl" style="left:1248px">4:00</div>
<div class="tt" style="left:1350px"></div><div class="tl" style="left:1352px">4:20</div>

<!-- right panel -->
<div class="a" style="left:1432px;top:68px;width:136px;height:809px;background:#232323"></div>
<div class="hd" style="top:70px;height:40px;background:#a33b39;color:#f1d2d0"><div class="ic l"></div><span>1 Group</span></div>
<div class="a" style="left:1433px;top:110px;width:5px;height:80px;background:#a33b39"></div>
<div class="hd sub" style="left:1439px;width:101px;top:112px;height:18px;background:#a33b39;color:#f1d2d0;border-left:1px solid #222"><div class="ic pl" style="left:4px;top:2px"></div><span style="left:23px;top:2px">Kick</span></div>
<div class="hd sub" style="left:1439px;width:101px;top:132px;height:57px;background:#d66b60;color:#3a1815"><div class="ic dn" style="left:4px;top:2px"></div><span style="left:23px;top:2px">Sub Bass</span></div>
<div class="hd" style="top:192px;height:37px;background:#fbf05c;color:#2f2b08"><div class="ic l"></div><span>Group Drum</span></div>
<div class="hd" style="top:231px;height:38px;background:#ea4ccd;color:#3a0a35"><div class="ic l"></div><span>Group ReSamp</span></div>
<div class="a" style="left:1433px;top:269px;width:5px;height:298px;background:#ea4ccd"></div>
<div class="hd sub" style="left:1439px;width:101px;top:271px;height:58px;background:#ea4ccd;color:#3a0a35"><div class="ic dn" style="left:4px"></div><span style="left:23px">RESample To</span></div>
<div class="hd sub" style="left:1439px;width:101px;top:331px;height:58px;background:#ea4ccd;color:#3a0a35"><div class="ic dn" style="left:4px"></div><span style="left:23px">13 PMTM_Gui</span></div>
<div class="hd sub" style="left:1439px;width:101px;top:391px;height:57px;background:#ea4ccd;color:#3a0a35"><div class="ic dn" style="left:4px"></div><span style="left:23px">14 SM_DH_11</span></div>
<div class="hd sub" style="left:1439px;width:101px;top:450px;height:57px;background:#ea4ccd;color:#3a0a35"><div class="ic dn" style="left:4px"></div><span style="left:23px">15 SS_FUND3</span></div>
<div class="hd sub" style="left:1439px;width:101px;top:509px;height:58px;background:#ea4ccd;color:#3a0a35"><div class="ic dn" style="left:4px"></div><span style="left:23px">16 TA_House</span></div>
<div class="hd" style="top:569px;height:18px;background:#a87abf;color:#2c1a33"><div class="ic l" style="top:2px"></div><span style="top:2px">Group Strings</span></div>
<div class="hd" style="top:589px;height:40px;background:#1f2a8c;color:#c9cdf2"><div class="ic l"></div><span>Group Vocais</span></div>
<div class="a" style="left:1433px;top:629px;width:5px;height:122px;background:#1f2a8c"></div>
<div class="hd sub" style="left:1439px;width:101px;top:631px;height:18px;background:#1f2a8c;color:#c9cdf2"><div class="ic pl" style="left:4px;top:2px"></div><span style="left:23px;top:2px">22 OS_SV_80</span></div>
<div class="hd sub" style="left:1439px;width:101px;top:652px;height:38px;background:#1f2a8c;color:#c9cdf2"><div class="ic dn" style="left:4px;top:2px"></div><span style="left:23px;top:2px">23 OS_SV_80</span></div>
<div class="hd sub" style="left:1439px;width:101px;top:692px;height:18px;background:#1f2a8c;color:#c9cdf2"><div class="ic pl" style="left:4px;top:2px"></div><span style="left:23px;top:2px">24 OS_SV_80</span></div>
<div class="hd sub" style="left:1439px;width:101px;top:713px;height:38px;background:#1f2a8c;color:#c9cdf2"><div class="ic dn" style="left:4px;top:2px"></div><span style="left:23px;top:2px">25 DS_VSH_1</span></div>
<div class="hd" style="top:753px;height:19px;background:#7cfbb0;color:#15331f"><div class="ic l" style="top:2px"></div><span style="top:2px">Group UK</span></div>
<div class="hd" style="top:774px;height:19px;background:#69e2fd;color:#0f2f36"><div class="ic l" style="top:2px"></div><span style="top:2px">Group Glith</span></div>
<div class="hd" style="top:795px;height:57px;background:#64bb3a;color:#142a08"><div class="ic l" style="top:2px"></div><span style="top:2px">Group FX</span></div>
<div class="a" style="left:1432px;top:852px;width:136px;height:5px;background:#2a2a2a"></div>
<div class="hd" style="top:857px;height:19px;background:#b8dde8;color:#1d2a2e"><div class="ic pl" style="top:2px"></div><span style="top:2px;left:28px">Main</span></div>

<div class="m" style="top:70px;height:40px"></div>
<div class="m" style="top:112px;height:18px"></div>
<div class="m" style="top:132px;height:57px"></div>
<div class="m" style="top:192px;height:37px"></div>
<div class="m" style="top:231px;height:38px"></div>
<div class="m" style="top:271px;height:58px"></div>
<div class="m" style="top:331px;height:58px"></div>
<div class="m" style="top:391px;height:57px"></div>
<div class="m" style="top:450px;height:57px"></div>
<div class="m" style="top:509px;height:58px"></div>
<div class="m" style="top:569px;height:18px"></div>
<div class="m" style="top:589px;height:40px"></div>
<div class="m" style="top:631px;height:18px"></div>
<div class="m" style="top:652px;height:38px"></div>
<div class="m" style="top:692px;height:18px"></div>
<div class="m" style="top:713px;height:38px"></div>
<div class="m" style="top:753px;height:19px"></div>
<div class="m" style="top:774px;height:19px"></div>
<div class="m" style="top:795px;height:57px"></div>
<div class="m" style="top:857px;height:19px;background:#3b3b3b"></div>
<div class="a" style="left:1563px;top:0;width:5px;height:898px;background:#3a3a3a"></div>

<!-- bottom right controls -->
<div class="a" style="left:1432px;top:877px;width:136px;height:21px;background:#2a2a2a"></div>
<div class="a" style="left:1434px;top:881px;width:15px;height:14px;background:#f2a85a;color:#3a2200;font-size:10px;text-align:center;line-height:14px;font-weight:bold">|||</div>
<div class="a" style="left:1453px;top:881px;width:36px;height:14px;background:#1b1b1b;border:1px solid #111;font-size:10.5px;color:#ccc;line-height:13px"><span style="background:#2e6e80;padding:0 1px 0 2px">1</span>.00x</div>
<div class="a" style="left:1502px;top:881px;width:17px;height:14px;background:#1b1b1b;color:#ccc;font-size:10.5px;text-align:center;line-height:14px">H</div>
<div class="a" style="left:1522px;top:881px;width:17px;height:14px;background:#1b1b1b;color:#ccc;font-size:10.5px;text-align:center;line-height:14px">W</div>

</div></body></html>
